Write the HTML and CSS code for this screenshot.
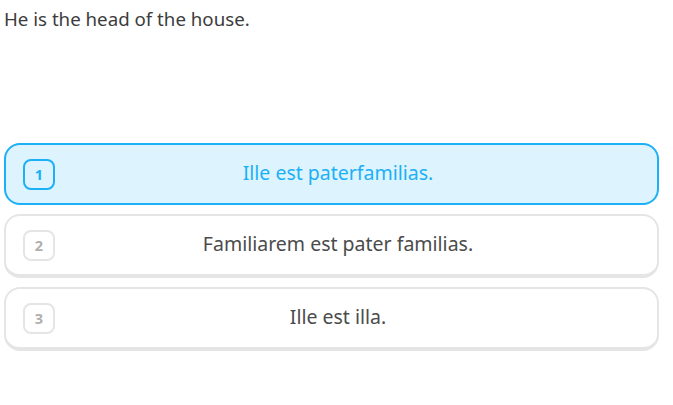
FILE: index.html
```html
<!DOCTYPE html>
<html>
<head>
<meta charset="utf-8">
<link rel="stylesheet" href="styles.css">
</head>
<body>
<div class="page">
  <p class="prompt">He is the head of the house.</p>
  <div class="choices">
    <div class="choice selected">
      <span class="key">1</span>
      <span class="label">Ille est paterfamilias.</span>
    </div>
    <div class="choice">
      <span class="key">2</span>
      <span class="label">Familiarem est pater familias.</span>
    </div>
    <div class="choice">
      <span class="key">3</span>
      <span class="label">Ille est illa.</span>
    </div>
  </div>
</div>
</body>
</html>
```
FILE: styles.css
```css
html, body {
  margin: 0;
  padding: 0;
  background: #ffffff;
}
body {
  font-family: "Noto Sans", "Open Sans", sans-serif;
  color: #3c3c3c;
}
.page {
  padding: 0 0 0 4px;
  width: 655px;
}
.prompt {
  margin: 0;
  padding-top: 6px;
  font-size: 18.7px;
  line-height: 26px;
  height: 135px;
}
.choices {
  display: flex;
  flex-direction: column;
  gap: 9px;
}
.choice {
  box-sizing: border-box;
  height: 64px;
  display: flex;
  align-items: center;
  border: 2px solid #e5e5e5;
  border-bottom-width: 4px;
  border-radius: 16px;
  padding: 0 36px 0 17px;
  background: #fff;
}
.choice.selected {
  margin-top: 2px;
  height: 62px;
  border-color: #1cb0f6;
  border-bottom-width: 2px;
  background: #ddf4ff;
}
.key {
  box-sizing: border-box;
  width: 32px;
  height: 31px;
  border: 2px solid #e5e5e5;
  border-radius: 8px;
  display: flex;
  align-items: center;
  justify-content: center;
  font-size: 14.5px;
  font-weight: 700;
  color: #afafaf;
}
.selected .key {
  border-color: #1cb0f6;
  color: #1cb0f6;
}
.label {
  flex: 1;
  text-align: center;
  font-size: 19.5px;
  padding-bottom: 3px;
  color: #4b4b4b;
}
.selected .label {
  color: #1cb0f6;
}
```
